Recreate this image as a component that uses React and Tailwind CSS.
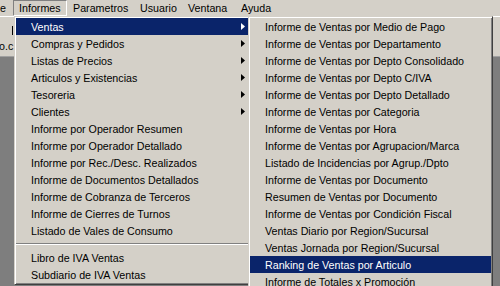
import React from "react";

const mainItems = [
  { label: "Ventas", arrow: true, active: true },
  { label: "Compras y Pedidos", arrow: true },
  { label: "Listas de Precios", arrow: true },
  { label: "Articulos y Existencias", arrow: true },
  { label: "Tesoreria", arrow: true },
  { label: "Clientes", arrow: true },
  { label: "Informe por Operador Resumen" },
  { label: "Informe por Operador Detallado" },
  { label: "Informe por Rec./Desc. Realizados" },
  { label: "Informe de Documentos Detallados" },
  { label: "Informe de Cobranza de Terceros" },
  { label: "Informe de Cierres de Turnos" },
  { label: "Listado de Vales de Consumo" },
  { sep: true },
  { label: "Libro de IVA Ventas" },
  { label: "Subdiario de IVA Ventas" },
];

const subItems = [
  "Informe de Ventas por Medio de Pago",
  "Informe de Ventas por Departamento",
  "Informe de Ventas por Depto Consolidado",
  "Informe de Ventas por Depto C/IVA",
  "Informe de Ventas por Depto Detallado",
  "Informe de Ventas por Categoria",
  "Informe de Ventas por Hora",
  "Informe de Ventas por Agrupacion/Marca",
  "Listado de Incidencias por Agrup./Dpto",
  "Informe de Ventas por Documento",
  "Resumen de Ventas por Documento",
  "Informe de Ventas por Condición Fiscal",
  "Ventas Diario por Region/Sucursal",
  "Ventas Jornada por Region/Sucursal",
  "Ranking de Ventas por Articulo",
  "Informe de Totales x Promoción",
];

function Arrow({ active }) {
  return (
    <svg width="4" height="7" viewBox="0 0 4 7" className="shrink-0">
      <polygon points="0,0 4,3.5 0,7" fill={active ? "#ffffff" : "#000000"} />
    </svg>
  );
}

function Item({ label, arrow, active }) {
  return (
    <div
      className={
        active
          ? "h-[17px] flex items-center pl-[15px] pr-[3px] bg-[#0a246a] text-white"
          : "h-[17px] flex items-center pl-[15px] pr-[3px] text-black"
      }
    >
      <span className="flex-1 whitespace-nowrap leading-none pt-[1px]">{label}</span>
      {arrow && <Arrow active={active} />}
    </div>
  );
}

function Separator() {
  return (
    <div className="h-[10px] flex flex-col justify-center">
      <div className="h-px bg-[#808080]" />
      <div className="h-px bg-white" />
    </div>
  );
}

const menuFrame =
  "absolute top-[16px] border border-t-[#d4d0c8] border-l-[#d4d0c8] border-r-[#404040] border-b-[#404040] bg-[#d4d0c8] p-[1px] shadow-[inset_1px_1px_0_#ffffff,inset_-1px_-1px_0_#808080]";

export default function App() {
  return (
    <div className="relative w-[500px] h-[286px] overflow-hidden bg-[#d4d0c8] font-['Liberation_Sans',Arial,sans-serif] text-[10.7px] text-black flex flex-col">
      {/* Menu bar */}
      <div className="h-[16px] flex items-stretch shrink-0">
        <div className="w-[13px] flex items-center overflow-hidden">
          <span className="leading-none">e</span>
        </div>
        <div className="w-[54px] flex items-center pl-[5px] border border-t-[#808080] border-l-[#808080] border-r-white border-b-white">
          <span className="leading-none">Informes</span>
        </div>
        <div className="w-[67px] flex items-center pl-[6px]">
          <span className="leading-none">Parametros</span>
        </div>
        <div className="w-[48px] flex items-center pl-[6px]">
          <span className="leading-none">Usuario</span>
        </div>
        <div className="w-[53px] flex items-center pl-[6px]">
          <span className="leading-none">Ventana</span>
        </div>
        <div className="flex items-center pl-[6px]">
          <span className="leading-none">Ayuda</span>
        </div>
      </div>

      {/* Toolbar strip */}
      <div className="h-[40px] shrink-0 border-t border-white relative">
        <div className="absolute left-[12px] top-[9px] w-px h-[9px] bg-black" />
        <div className="absolute left-[-1px] top-[24px] leading-none">o.c</div>
      </div>

      {/* Workspace */}
      <div className="flex-1 bg-[#7e7e7e] border-t border-[#a0a0a0]" />

      {/* Informes dropdown */}
      <div className={menuFrame + " left-[14px] w-[236px]"}>
        {mainItems.map((it, i) =>
          it.sep ? <Separator key={i} /> : <Item key={i} {...it} />
        )}
      </div>

      {/* Ventas submenu */}
      <div className={menuFrame + " left-[248px] w-[245px]"}>
        {subItems.map((label, i) => (
          <Item key={i} label={label} active={i === 14} />
        ))}
      </div>
    </div>
  );
}
